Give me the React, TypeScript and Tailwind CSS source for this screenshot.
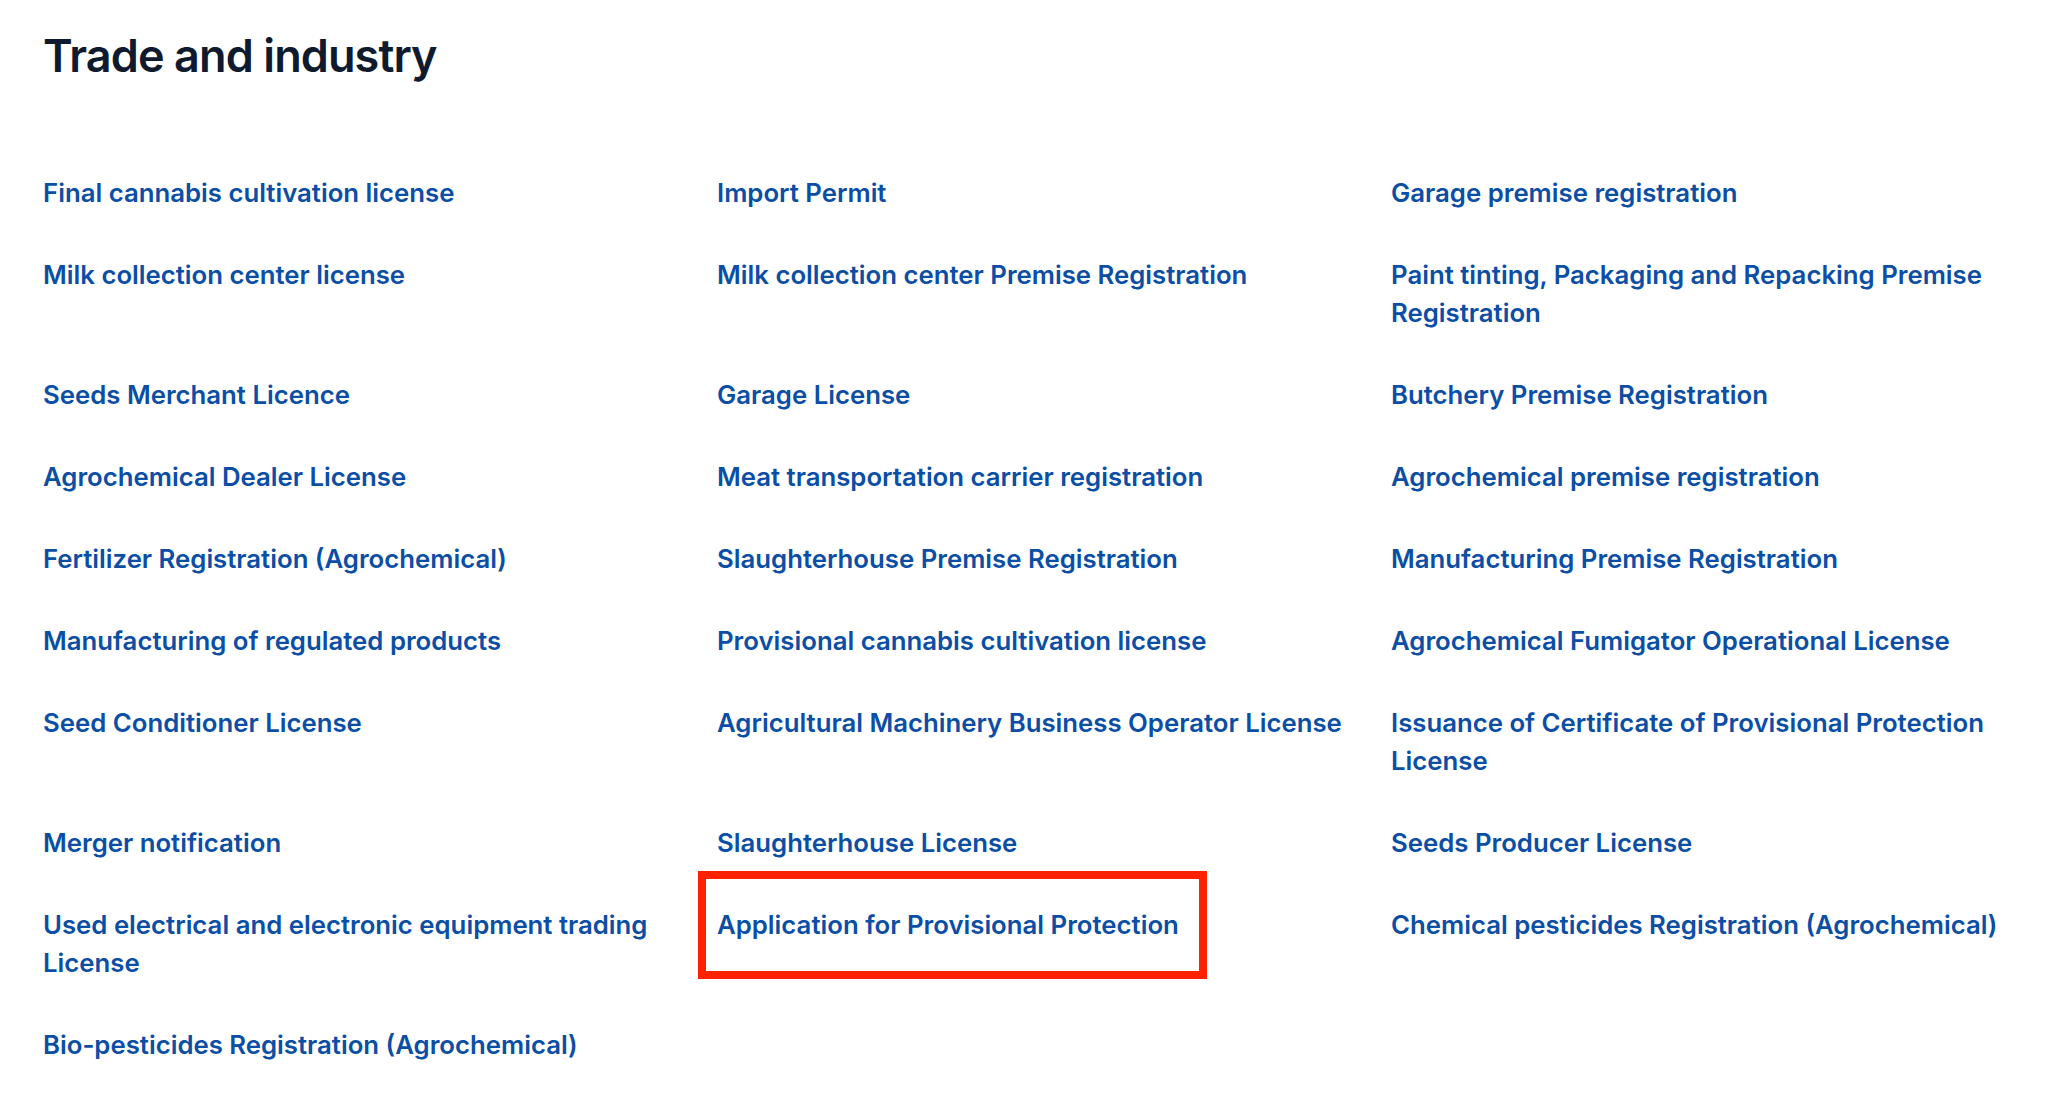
const items: { label: string; highlight?: boolean }[] = [
  { label: 'Final cannabis cultivation license' },
  { label: 'Import Permit' },
  { label: 'Garage premise registration' },
  { label: 'Milk collection center license' },
  { label: 'Milk collection center Premise Registration' },
  { label: 'Paint tinting, Packaging and Repacking Premise Registration' },
  { label: 'Seeds Merchant Licence' },
  { label: 'Garage License' },
  { label: 'Butchery Premise Registration' },
  { label: 'Agrochemical Dealer License' },
  { label: 'Meat transportation carrier registration' },
  { label: 'Agrochemical premise registration' },
  { label: 'Fertilizer Registration (Agrochemical)' },
  { label: 'Slaughterhouse Premise Registration' },
  { label: 'Manufacturing Premise Registration' },
  { label: 'Manufacturing of regulated products' },
  { label: 'Provisional cannabis cultivation license' },
  { label: 'Agrochemical Fumigator Operational License' },
  { label: 'Seed Conditioner License' },
  { label: 'Agricultural Machinery Business Operator License' },
  { label: 'Issuance of Certificate of Provisional Protection License' },
  { label: 'Merger notification' },
  { label: 'Slaughterhouse License' },
  { label: 'Seeds Producer License' },
  { label: 'Used electrical and electronic equipment trading License' },
  { label: 'Application for Provisional Protection', highlight: true },
  { label: 'Chemical pesticides Registration (Agrochemical)' },
  { label: 'Bio-pesticides Registration (Agrochemical)' },
];

export default function App() {
  return (
    <div
      className="min-h-screen bg-white pl-[43px] pr-[13px] pt-[27px]"
      style={{ fontFamily: 'Inter, "Open Sans", sans-serif' }}
    >
      <h1 className="text-[45px] font-semibold leading-[58px] tracking-[-0.02em] text-[#0f1a2e]">
        Trade and industry
      </h1>

      <div className="mt-[89px] grid grid-cols-3 gap-x-[30px] gap-y-[44px]">
        {items.map((item) => (
          <div key={item.label} className="relative">
            <a
              href="#"
              className="text-[25.75px] font-semibold leading-[38px] text-[#0b4ea6]"
            >
              {item.label}
            </a>
            {item.highlight && (
              <div className="pointer-events-none absolute -left-[19px] -top-[35px] h-[108px] w-[509px] border-[8px] border-[#ff2200]" />
            )}
          </div>
        ))}
      </div>
    </div>
  );
}
